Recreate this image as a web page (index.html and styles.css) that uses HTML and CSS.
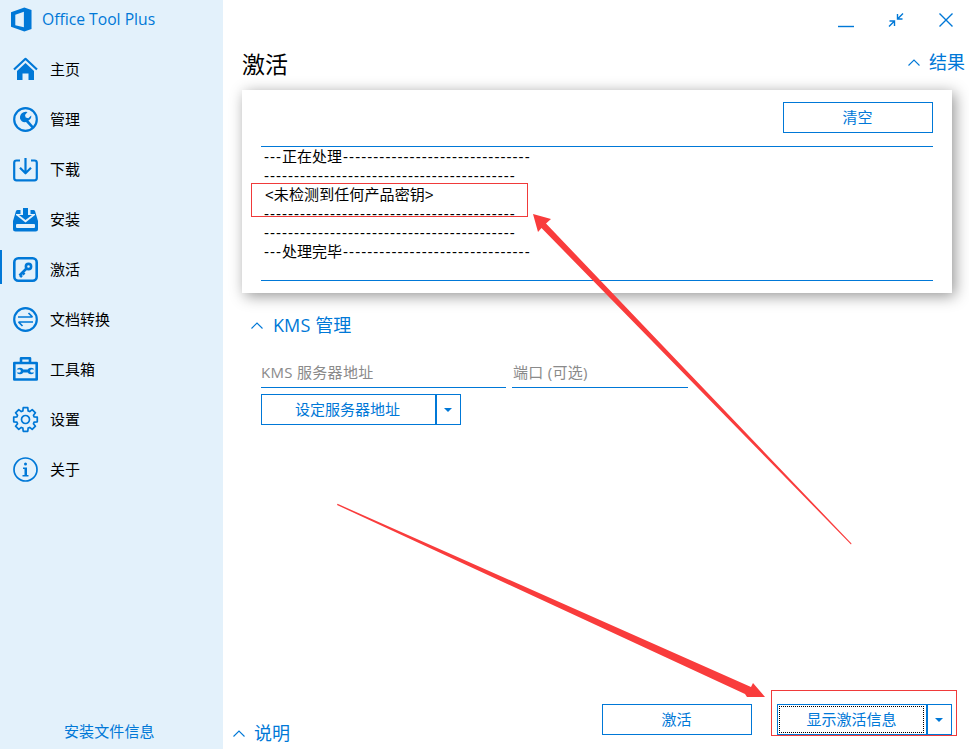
FILE: index.html
```html
<!DOCTYPE html>
<html lang="zh-CN">
<head>
<meta charset="utf-8">
<title>Office Tool Plus</title>
<link rel="stylesheet" href="styles.css">
</head>
<body>
<div class="app">
  <aside class="sidebar">
    <div class="brand">
      <svg class="logo" viewBox="0 0 22 26"><path d="M0 5.5 14 0.5 21.5 3V23L14 25.5 0 20.5ZM4.5 19 13.5 21V5L4.5 8Z" fill-rule="evenodd"/></svg>
      <span class="brand-name">Office Tool Plus</span>
    </div>
    <nav class="nav">
      <a class="nav-item"><svg class="icon" viewBox="0 0 25 25"><path class="line" d="M1 12.5 12.5 1.8 24 12.5"/><path class="solid" d="M4 14 12.5 6 21 14V23H15.5V16.5H9.5V23H4Z"/></svg><span>主页</span></a>
      <a class="nav-item"><svg class="icon" viewBox="0 0 25 25"><circle class="line" cx="12.5" cy="12.5" r="11.3"/><path class="solid" d="M14.5 5 12 8 12.7 10.6 15.3 11.3 18.2 8.6Q18.8 11.8 15.4 13.4L20.6 19.4 18.8 21.2 13 15Q8.5 15.8 7 11.5 6.5 7 10.5 5.2 12.5 4.4 14.5 5Z"/></svg><span>管理</span></a>
      <a class="nav-item"><svg class="icon" viewBox="0 0 25 25"><path class="line" d="M7 3.5H3.5A2.3 2.3 0 0 0 1.2 5.8V21A2.3 2.3 0 0 0 3.5 23.3H21.5A2.3 2.3 0 0 0 23.8 21V5.8A2.3 2.3 0 0 0 21.5 3.5H18"/><path class="line" d="M12.5 1V16M7 10.8 12.5 16.3 18 10.8"/></svg><span>下载</span></a>
      <a class="nav-item"><svg class="icon" viewBox="0 0 25 25"><path class="solid" d="M4.5 3H20.5Q21.5 3 22 4L25 14V22Q25 24.5 22.5 24.5H2.5Q0 24.5 0 22V14L3 4Q3.5 3 4.5 3Z"/><path class="cut" d="M7.5 1H17.5V7H22V8L12.5 15.5 3 8V7H7.5Z"/><path class="solid" d="M10 1H15V8H19L12.5 13 6 8H10Z"/><rect class="cut" x="3" y="17" width="19" height="4" rx="1"/></svg><span>安装</span></a>
      <a class="nav-item active"><svg class="icon" viewBox="0 0 25 25"><rect class="line bold" x="1.3" y="1.3" width="22.4" height="22.4" rx="4"/><circle class="line bold" cx="15.5" cy="9.5" r="2.6"/><path class="line bold" d="M13.5 11.5 6.5 18.5M9.5 15.5 11.5 17.5M7 18 9 20"/></svg><span>激活</span></a>
      <a class="nav-item"><svg class="icon" viewBox="0 0 25 25"><circle class="line" cx="12.5" cy="12.5" r="11.3"/><path class="line thin" d="M5 10H19.5M15.5 6 19.5 10M20 15H5.5M9.5 19 5.5 15"/></svg><span>文档转换</span></a>
      <a class="nav-item"><svg class="icon" viewBox="0 0 25 25"><path class="line bold" d="M8 6V1.2H17V6"/><rect class="line bold" x="1.3" y="6" width="22.4" height="16.5"/><circle class="solid" cx="7" cy="14" r="3.3"/><circle class="solid" cx="18" cy="14" r="3.3"/><rect class="solid" x="7" y="12.5" width="11" height="3"/><path class="cut" d="M3.5 12.5H7L8 14 7 15.5H3.5ZM21.5 12.5H18L17 14 18 15.5H21.5Z"/></svg><span>工具箱</span></a>
      <a class="nav-item"><svg class="icon" viewBox="-12.5 -12.5 25 25"><polygon class="line thin" points="8.6,-2.63 11.78,-2.29 11.78,2.29 8.6,2.63 7.95,4.23 9.95,6.71 6.71,9.95 4.23,7.95 2.63,8.6 2.29,11.78 -2.29,11.78 -2.63,8.6 -4.23,7.95 -6.71,9.95 -9.95,6.71 -7.95,4.23 -8.6,2.63 -11.78,2.29 -11.78,-2.29 -8.6,-2.63 -7.95,-4.23 -9.95,-6.71 -6.71,-9.95 -4.23,-7.95 -2.63,-8.6 -2.29,-11.78 2.29,-11.78 2.63,-8.6 4.23,-7.95 6.71,-9.95 9.95,-6.71 7.95,-4.23"/><circle class="line thin" r="4"/></svg><span>设置</span></a>
      <a class="nav-item"><svg class="icon" viewBox="0 0 25 25"><circle class="line thin" cx="12.5" cy="12.5" r="11.5"/><circle class="solid" cx="12.5" cy="7" r="1.5"/><path class="solid" d="M10 10.5H14V18H15.5V19.5H9.5V18H11.5V12H10Z"/></svg><span>关于</span></a>
    </nav>
    <a class="sidebar-foot">安装文件信息</a>
  </aside>

  <main class="main">
    <div class="window-controls">
      <svg class="ctl" viewBox="0 0 16 16"><path d="M0 14.5H16"/></svg>
      <svg class="ctl" viewBox="0 0 16 16"><path d="M15 1.5 10 6.5M9.5 2V7H14.5M1 14.5 6 9.5M6.5 14V9H1.5"/></svg>
      <svg class="ctl" viewBox="0 0 16 16"><path d="M1.5 1.5 14.5 14.5M14.5 1.5 1.5 14.5"/></svg>
    </div>

    <header class="page-head">
      <h1 class="page-title">激活</h1>
      <div class="result-toggle"><svg class="chev" viewBox="0 0 12 7"><path d="M.5 6.5 6 1 11.5 6.5"/></svg><span>结果</span></div>
    </header>

    <section class="card">
      <div class="card-tools"><button class="btn btn-clear">清空</button></div>
      <div class="log">
        <div class="log-line"><span class="d">---</span>正在处理<span class="d tail">-------------------------------</span></div>
        <div class="log-line"><span class="d">------------------------------------------</span></div>
        <div class="log-line key">&lt;未检测到任何产品密钥&gt;</div>
        <div class="log-line"><span class="d">------------------------------------------</span></div>
        <div class="log-line"><span class="d">------------------------------------------</span></div>
        <div class="log-line"><span class="d">---</span>处理完毕<span class="d tail">-------------------------------</span></div>
      </div>
    </section>

    <section class="kms">
      <div class="kms-head"><svg class="chev" viewBox="0 0 12 7"><path d="M.5 6.5 6 1 11.5 6.5"/></svg><span>KMS 管理</span></div>
      <div class="fields">
        <div class="field field-addr">KMS 服务器地址</div>
        <div class="field field-port">端口 (可选)</div>
      </div>
      <div class="split">
        <button class="btn btn-kms">设定服务器地址</button>
        <button class="btn btn-drop"><svg class="caret" viewBox="0 0 8 4"><path d="M0 0H8L4 4Z"/></svg></button>
      </div>
    </section>

    <footer class="page-foot">
      <div class="note-toggle"><svg class="chev" viewBox="0 0 12 7"><path d="M.5 6.5 6 1 11.5 6.5"/></svg><span>说明</span></div>
      <div class="actions">
        <button class="btn btn-action">激活</button>
        <div class="split">
          <button class="btn btn-action focus">显示激活信息</button>
          <button class="btn btn-drop"><svg class="caret" viewBox="0 0 8 4"><path d="M0 0H8L4 4Z"/></svg></button>
        </div>
      </div>
    </footer>
  </main>
</div>

<svg class="annotations" viewBox="0 0 969 749">
  <rect class="mark" x="251.5" y="183.5" width="276" height="33"/>
  <rect class="mark" x="771.5" y="690.5" width="185" height="45"/>
  <polygon class="arrow" points="533,214 551,219 546,223.5 851.5,543.5 851,544.5 541.5,228 538,232"/>
  <polygon class="arrow" points="337.5,503.8 751,687 753,683 765,697 747,697 745,694 337,505"/>
</svg>
</body>
</html>
```

FILE: styles.css
```css
* { box-sizing: border-box; }
html, body { margin: 0; padding: 0; height: 749px; overflow: hidden; background: #fff; }
body {
  position: relative;
  font-family: "Open Sans", "Noto Sans CJK SC", sans-serif;
  font-size: 15px;
  color: #000;
}
.app { display: flex; width: 969px; height: 749px; }

/* Sidebar */
.sidebar {
  width: 223px;
  flex: none;
  display: flex;
  flex-direction: column;
  background: #e3f1fb;
}
.brand {
  height: 44px;
  padding: 7px 0 12px 11px;
  display: flex;
  align-items: center;
  gap: 10px;
}
.logo { width: 21px; height: 25px; fill: #0078d7; }
.brand-name { color: #0078d7; font-size: 15.7px; line-height: 25px; }
.nav { display: flex; flex-direction: column; }
.nav-item {
  position: relative;
  height: 50px;
  padding-left: 13px;
  display: flex;
  align-items: center;
  gap: 12px;
  line-height: 20px;
}
.nav-item.active::before {
  content: "";
  position: absolute;
  left: 0;
  top: 6px;
  width: 2px;
  height: 34px;
  background: #0078d7;
}
.icon { width: 25px; height: 25px; flex: none; overflow: visible; }
.line { fill: none; stroke: #0078d7; stroke-width: 2.2; stroke-linejoin: round; }
.line.thin { stroke-width: 1.7; }
.line.bold { stroke-width: 2.6; }
.solid { fill: #0078d7; }
.cut { fill: #e3f1fb; }
.sidebar-foot {
  margin-top: auto;
  padding: 0 0 7px 64px;
  color: #0078d7;
  line-height: 22px;
  letter-spacing: .1px;
}

/* Main */
.main {
  flex: 1;
  min-width: 0;
  display: flex;
  flex-direction: column;
}
.window-controls {
  height: 40px;
  padding: 12px 15px 0 0;
  display: flex;
  justify-content: flex-end;
  gap: 34px;
}
.ctl { width: 16px; height: 16px; fill: none; stroke: #0078d7; stroke-width: 1.4; }
.page-head {
  height: 50px;
  padding: 7px 4px 0 19px;
  display: flex;
  justify-content: space-between;
  align-items: flex-start;
}
.page-title { margin: 0; font-size: 23px; font-weight: 400; line-height: 35px; }
.chev { width: 12px; height: 7px; fill: none; stroke: #0078d7; stroke-width: 1.1; flex: none; }
.result-toggle, .note-toggle {
  display: flex;
  align-items: center;
  gap: 9px;
  color: #0078d7;
  font-size: 18px;
  line-height: 30px;
}

/* Result card */
.card {
  width: 710px;
  height: 203px;
  margin-left: 19px;
  padding: 12px 19px 0;
  background: #fff;
  box-shadow: 3px 3px 14px rgba(0, 0, 0, .42);
}
.card-tools { display: flex; justify-content: flex-end; height: 44px; }
.btn {
  height: 31px;
  padding: 0 1px 0 0;
  background: #fff;
  border: 1px solid #0078d7;
  border-radius: 0;
  color: #0078d7;
  font: inherit;
  line-height: 27px;
}
.btn-clear { width: 150px; }
.log {
  height: 135px;
  padding: 0 0 0 2px;
  border-top: 1px solid #0078d7;
  border-bottom: 1px solid #0078d7;
  font-family: "Liberation Sans", "Noto Sans CJK SC", sans-serif;
  font-size: 15px;
}
.log-line { height: 19px; line-height: 19px; white-space: nowrap; padding-left: 1px; }
.log-line.key { padding-left: 2px; letter-spacing: .1px; }
.d { letter-spacing: 1px; }
.tail { margin-left: 1px; letter-spacing: 1.06px; }

/* KMS */
.kms { padding: 17px 0 0 28px; }
.kms-head {
  display: flex;
  align-items: center;
  gap: 10px;
  color: #0078d7;
  font-size: 18px;
  line-height: 30px;
  letter-spacing: .1px;
}
.fields { display: flex; gap: 6px; margin: 16px 0 6px 10px; }
.field {
  height: 32px;
  border-bottom: 1px solid #0078d7;
  color: #8a8a8a;
  line-height: 32px;
  letter-spacing: .3px;
  white-space: nowrap;
}
.field-addr { width: 245px; }
.field-port { width: 176px; padding-left: 1px; }
.kms .split { margin-left: 10px; }
.split { display: flex; }
.btn-kms { width: 175px; padding-right: 2px; }
.btn-drop { width: 25px; display: flex; align-items: center; justify-content: center; }
.caret { width: 8px; height: 4px; fill: #0078d7; }

/* Bottom */
.page-foot {
  margin-top: auto;
  height: 45px;
  padding: 0 17px 0 10px;
  display: flex;
  justify-content: space-between;
}
.note-toggle { align-self: flex-end; padding-bottom: 1px; }
.actions { display: flex; gap: 25px; }
.btn-action { width: 150px; position: relative; }
.focus::after {
  content: "";
  position: absolute;
  inset: 1px 2px 1px 1px;
  border: 1px dotted #000;
}

/* Hand-drawn annotations on top of the screenshot */
.annotations { position: absolute; left: 0; top: 0; width: 969px; height: 749px; pointer-events: none; }
.mark { fill: none; stroke: #f03a3a; stroke-width: 1; }
.arrow { fill: #f93c3c; }
```
